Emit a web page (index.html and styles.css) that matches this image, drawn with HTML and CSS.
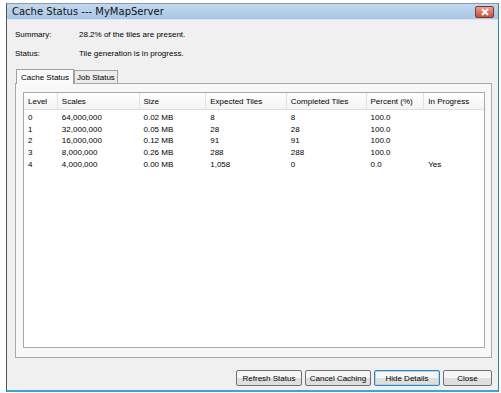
FILE: index.html
```html
<!DOCTYPE html>
<html lang="en">
<head>
  <meta charset="UTF-8">
  <link rel="stylesheet" href="styles.css">
  <title>Cache Status</title>
</head>
<body>
  <div class="window">
    <div class="titlebar">
      <span class="title">Cache Status --- MyMapServer</span>
      <div class="close-btn">
        <svg width="10" height="8" viewBox="0 0 10 8">
          <path d="M2 1 L8 7 M8 1 L2 7" stroke="#fff" stroke-width="2"/>
        </svg>
      </div>
    </div>
    <div class="content">
      <div class="info">
        <div class="info-row"><span class="label">Summary:</span><span>28.2% of the tiles are present.</span></div>
        <div class="info-row"><span class="label">Status:</span><span>Tile generation is in progress.</span></div>
      </div>
      <div class="tabs">
        <div class="tab active">Cache Status</div>
        <div class="tab">Job Status</div>
      </div>
      <div class="panel">
        <div class="table-box">
          <div class="thead">
            <div class="th c1">Level</div>
            <div class="th c2">Scales</div>
            <div class="th c3">Size</div>
            <div class="th c4">Expected Tiles</div>
            <div class="th c5">Completed Tiles</div>
            <div class="th c6">Percent (%)</div>
            <div class="th c7">In Progress</div>
          </div>
          <div class="tbody">
            <div class="tr"><div class="c1">0</div><div class="c2">64,000,000</div><div class="c3">0.02 MB</div><div class="c4">8</div><div class="c5">8</div><div class="c6">100.0</div><div class="c7"></div></div>
            <div class="tr"><div class="c1">1</div><div class="c2">32,000,000</div><div class="c3">0.05 MB</div><div class="c4">28</div><div class="c5">28</div><div class="c6">100.0</div><div class="c7"></div></div>
            <div class="tr"><div class="c1">2</div><div class="c2">16,000,000</div><div class="c3">0.12 MB</div><div class="c4">91</div><div class="c5">91</div><div class="c6">100.0</div><div class="c7"></div></div>
            <div class="tr"><div class="c1">3</div><div class="c2">8,000,000</div><div class="c3">0.26 MB</div><div class="c4">288</div><div class="c5">288</div><div class="c6">100.0</div><div class="c7"></div></div>
            <div class="tr"><div class="c1">4</div><div class="c2">4,000,000</div><div class="c3">0.00 MB</div><div class="c4">1,058</div><div class="c5">0</div><div class="c6">0.0</div><div class="c7">Yes</div></div>
          </div>
        </div>
      </div>
      <div class="buttons">
        <div class="btn">Refresh Status</div>
        <div class="btn">Cancel Caching</div>
        <div class="btn focused">Hide Details</div>
        <div class="btn close">Close</div>
      </div>
    </div>
  </div>
</body>
</html>
```

FILE: styles.css
```css
body {
  margin: 0;
  background: #fff;
  font-family: "Liberation Sans", Arial, sans-serif;
  font-size: 8px;
  color: #000;
}

.window {
  margin: 3px 0 0 6px;
  width: 491px;
  height: 386px;
  border-left: 1px solid #555;
  border-right: 1px solid #2a8aa0;
  border-top: 1px solid #8a9aaa;
  border-bottom: 2px solid #3aa8c8;
  background: #f0f0f0;
  display: flex;
  flex-direction: column;
}

.titlebar {
  height: 15px;
  flex-shrink: 0;
  background: linear-gradient(#c2d8ee, #a9c6e6);
  border-bottom: 1px solid #d8e6f4;
  display: flex;
  align-items: center;
  justify-content: space-between;
  padding: 0 4px 0 5px;
}

.title {
  font-family: "DejaVu Sans", sans-serif;
  font-size: 10px;
  color: #111;
}

.close-btn {
  width: 17px;
  height: 10px;
  background: linear-gradient(#e8a090, #c8503a);
  border: 1px solid #7a3a30;
  border-radius: 2px;
  display: flex;
  align-items: center;
  justify-content: center;
}

.content {
  flex: 1;
  display: flex;
  flex-direction: column;
  padding: 0 6px 0 8px;
}

.info {
  padding-top: 9px;
  display: flex;
  flex-direction: column;
  gap: 8px;
}

.info-row {
  display: flex;
  height: 11px;
  align-items: center;
}

.label {
  width: 64px;
}

.tabs {
  display: flex;
  margin-top: 9px;
  margin-left: 1px;
  height: 15px;
  align-items: flex-end;
}

.tab {
  height: 12px;
  padding: 0 2px;
  border: 1px solid #a0a0a0;
  border-bottom: none;
  background: #ececec;
  display: flex;
  align-items: center;
}

.tab.active {
  height: 14px;
  padding: 0 4px;
  background: #fafafa;
  margin-bottom: -1px;
  position: relative;
  z-index: 1;
}

.panel {
  height: 256px;
  border: 1px solid #a8a8a8;
  background: #f8f8f8;
  padding: 8px 6px 9px 7px;
}

.table-box {
  height: 100%;
  background: #fff;
  border: 1px solid #a8a8a8;
  box-sizing: border-box;
}

.thead {
  display: flex;
  height: 16px;
  border-bottom: 1px solid #e0e0e0;
  background: linear-gradient(#fff, #f4f4f4);
}

.th {
  display: flex;
  align-items: center;
  padding-left: 4px;
  border-right: 1px solid #e2e2e2;
  box-sizing: border-box;
}

.tbody {
  padding-top: 2px;
}

.tr {
  display: flex;
  height: 11.6px;
  align-items: center;
}

.tr > div {
  padding-left: 4px;
  box-sizing: border-box;
}

.c1 { width: 34px; }
.c2 { width: 82px; }
.c3 { width: 67px; }
.c4 { width: 81px; }
.c5 { width: 80px; }
.c6 { width: 58px; }
.c7 { width: 60px; border-right: none; }

.buttons {
  display: flex;
  justify-content: flex-end;
  gap: 3px;
  margin-top: 12px;
}

.btn {
  width: 64px;
  height: 14px;
  border: 1px solid #707070;
  border-radius: 2px;
  background: linear-gradient(#f6f6f6 50%, #dedede 50%);
  display: flex;
  align-items: center;
  justify-content: center;
}

.btn.focused {
  border-color: #3c7fb1;
  box-shadow: inset 0 0 0 1px #a8d8f0;
}

.btn.close {
  width: 47px;
}
```
